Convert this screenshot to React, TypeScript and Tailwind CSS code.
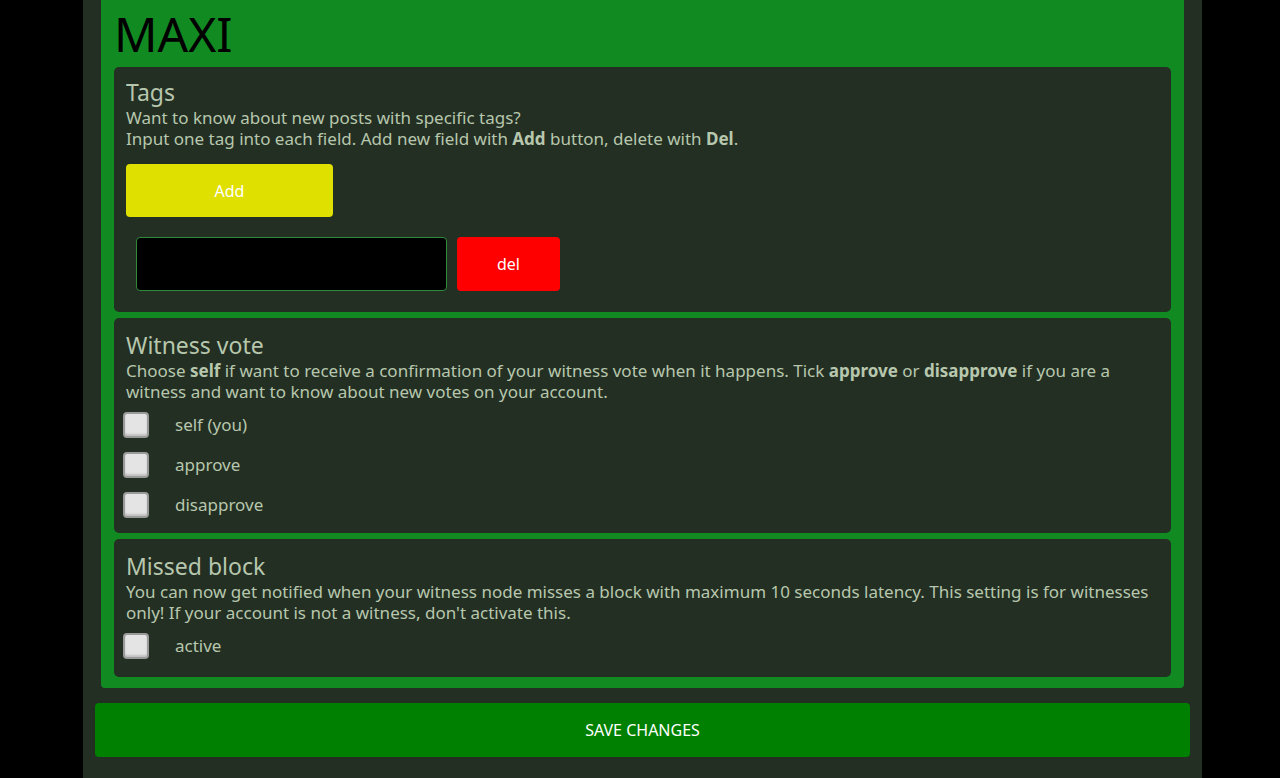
const Box = () => (
  <span className="inline-block w-[26px] h-[26px] rounded-[4px] bg-[#e4e4e4] border-2 border-[#9a9a9a] shadow-[inset_0_-2px_2px_rgba(0,0,0,0.15)]" />
)

const Check = ({ label }: { label: string }) => (
  <div className="flex items-center h-[40px] -ml-[3px]">
    <Box />
    <span className="ml-[26px] text-[17px]">{label}</span>
  </div>
)

const sans = "font-[family-name:'Liberation_Sans',sans-serif]"

export default function App() {
  return (
    <div className="min-h-[778px] bg-black font-[family-name:'Liberation_Serif',serif] text-[#b7c7ad]">
      <div className="w-[1119px] ml-[83px] bg-[#232f23] min-h-[778px] pb-[9px]">
        <div className="mx-[18px] bg-[#128a22] rounded-b-[4px] px-[13px] pb-[11px]">
          <h1 className="text-[48px] leading-[66px] text-black pt-[1px]">MAXI</h1>
          <div className="flex flex-col gap-[6px]">
            <section className="bg-[#232f23] rounded-[5px] px-[12px] pt-[10px] pb-[21px]">
              <h2 className="text-[23px] leading-[30px]">Tags</h2>
              <p className="text-[17px] leading-[21px]">Want to know about new posts with specific tags?</p>
              <p className="text-[17px] leading-[21px]">
                Input one tag into each field. Add new field with <b>Add</b> button, delete with <b>Del</b>.
              </p>
              <button className={`mt-[15px] w-[207px] h-[53px] rounded-[4px] bg-[#e0e000] text-white text-[16px] ${sans}`}>Add</button>
              <div className="flex gap-[10px] mt-[20px] ml-[10px]">
                <input className="w-[311px] h-[54px] bg-black border border-[#2f8a3a] rounded-[4px]" />
                <button className={`w-[103px] h-[54px] rounded-[4px] bg-[#ff0000] text-white text-[16px] ${sans}`}>del</button>
              </div>
            </section>
            <section className="bg-[#232f23] rounded-[5px] px-[12px] pt-[12px] pb-[8px]">
              <h2 className="text-[23px] leading-[30px]">Witness vote</h2>
              <p className="text-[17px] leading-[21px] mb-[3px]">
                Choose <b>self</b> if want to receive a confirmation of your witness vote when it happens. Tick <b>approve</b> or <b>disapprove</b> if you are a witness and want to know about new votes on your account.
              </p>
              <Check label="self (you)" />
              <Check label="approve" />
              <Check label="disapprove" />
            </section>
            <section className="bg-[#232f23] rounded-[5px] px-[12px] pt-[12px] pb-[11px]">
              <h2 className="text-[23px] leading-[30px]">Missed block</h2>
              <p className="text-[17px] leading-[21px] mb-[3px]">
                You can now get notified when your witness node misses a block with maximum 10 seconds latency. This setting is for witnesses only! If your account is not a witness, don't activate this.
              </p>
              <Check label="active" />
            </section>
          </div>
        </div>
        <button className={`block mt-[15px] mx-[12px] w-[1095px] h-[54px] rounded-[4px] bg-[#008000] text-white text-[16px] ${sans}`}>SAVE CHANGES</button>
      </div>
    </div>
  )
}
